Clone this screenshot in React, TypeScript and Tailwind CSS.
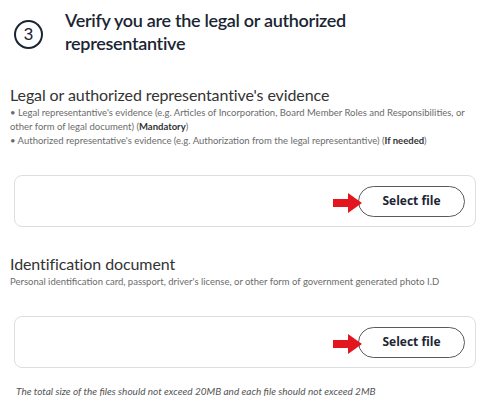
import React from "react";

function Arrow() {
  return (
    <svg width="30" height="20" viewBox="0 0 30 20" className="absolute left-[-25px] top-[7px] z-10">
      <path d="M0 6 H15 V0 L29 10 L15 20 V14 H0 Z" fill="#e3161f" />
    </svg>
  );
}

function FileBox() {
  return (
    <div className="ml-[14px] mr-[10px] h-[52px] rounded-[8px] border border-[#dedede] flex items-center justify-end pr-[10px]">
      <div className="relative">
        <Arrow />
        <button className="relative w-[107px] h-[31px] rounded-full border border-[#555b61] bg-white text-[12px] font-bold text-[#1b2533] font-['Open_Sans',sans-serif]">
          Select file
        </button>
      </div>
    </div>
  );
}

export default function App() {
  return (
    <div className="w-[486px] h-[410px] bg-white font-['Lato',sans-serif] overflow-hidden">
      <div className="flex pt-[9px]">
        <div className="ml-[14px] mt-[11px] w-[29px] h-[29px] rounded-full border-2 border-[#1b2533] flex items-center justify-center text-[17px] text-[#1b2533] font-['Liberation_Sans',sans-serif]">
          3
        </div>
        <div className="ml-[22px] text-[18px] leading-[23px] tracking-[-0.3px] font-semibold text-[#1b2533]">
          Verify you are the legal or authorized
          <br />
          representantive
        </div>
      </div>
      <div className="pl-[10px] pr-[12px] mt-[30px]">
        <div className="text-[16px] leading-[20px] tracking-[-0.1px] text-[#333]">Legal or authorized representantive's evidence</div>
        <div className="text-[9.5px] leading-[14px] text-[#6b6b6b] mt-[1px]">
          <div>• Legal representantive's evidence (e.g. Articles of Incorporation, Board Member Roles and Responsibilities, or other form of legal document) (<b className="text-[#333]">Mandatory</b>)</div>
          <div>• Authorized representative's evidence (e.g. Authorization from the legal representantive) (<b className="text-[#333]">If needed</b>)</div>
        </div>
      </div>
      <div className="mt-[27px]">
        <FileBox />
      </div>
      <div className="px-[10px] mt-[27px]">
        <div className="text-[16px] leading-[20px] tracking-[-0.1px] text-[#333]">Identification document</div>
        <div className="text-[9.5px] leading-[14px] text-[#6b6b6b] mt-[1px]">
          Personal identification card, passport, driver's license, or other form of government generated photo I.D
        </div>
      </div>
      <div className="mt-[27px]">
        <FileBox />
      </div>
      <div className="px-[16px] mt-[16px] text-[10px] italic text-[#555]">
        The total size of the files should not exceed 20MB and each file should not exceed 2MB
      </div>
    </div>
  );
}
